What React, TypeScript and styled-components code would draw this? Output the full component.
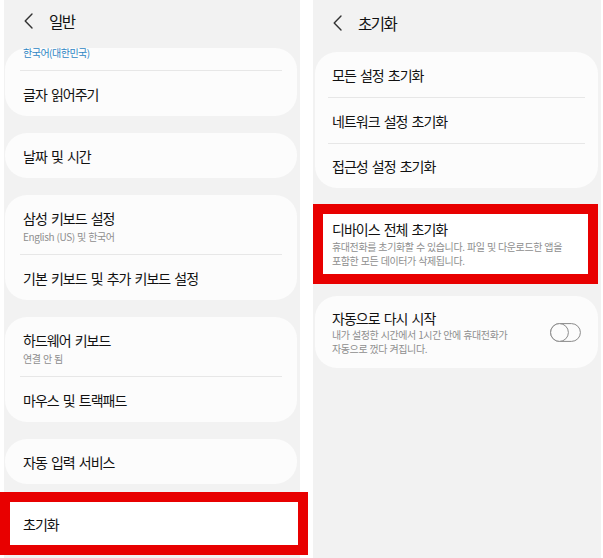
import React from "react";
import styled, { createGlobalStyle } from "styled-components";

const Global = createGlobalStyle`
  html, body { margin: 0; padding: 0; background: #ffffff; }
  body { font-family: "Noto Sans CJK KR", "Noto Sans", sans-serif; }
  #root { width: 603px; height: 558px; overflow: hidden; }
`;

const Page = styled.div`
  display: flex;
  align-items: stretch;
  width: 603px;
  height: 558px;
  padding-left: 4px;
  box-sizing: border-box;
  background: #ffffff;
`;

const Panel = styled.div<{ $width: number; $padL: number; $padR: number; $ml?: number }>`
  display: flex;
  flex-direction: column;
  width: ${(p) => p.$width}px;
  margin-left: ${(p) => p.$ml ?? 0}px;
  padding: 0 ${(p) => p.$padR}px 0 ${(p) => p.$padL}px;
  box-sizing: border-box;
  background: #f2f2f2;
  flex-shrink: 0;
`;

const Header = styled.div<{ $height: number; $padL: number }>`
  display: flex;
  align-items: center;
  gap: 16px;
  height: ${(p) => p.$height}px;
  padding-left: ${(p) => p.$padL}px;
  flex-shrink: 0;
`;

const HeaderTitle = styled.span`
  font-size: 15.5px;
  letter-spacing: -1.5px;
  color: #111111;
  line-height: 20px;
`;

const List = styled.div<{ $padTop: number }>`
  display: flex;
  flex-direction: column;
  gap: 17px;
  padding-top: ${(p) => p.$padTop}px;
  flex-shrink: 0;
`;

const Card = styled.div`
  display: flex;
  flex-direction: column;
  flex-shrink: 0;
  background: #fcfcfc;
  border-radius: 22px;
  overflow: hidden;
`;

const Frame = styled.div<{ $m: string }>`
  display: flex;
  flex-direction: column;
  flex-shrink: 0;
  border: 10px solid #e80000;
  background: #ffffff;
  margin: ${(p) => p.$m};
`;

const Row = styled.div<{ $h?: number; $pt?: number; $pb?: number; $px?: number }>`
  display: flex;
  align-items: center;
  justify-content: space-between;
  gap: 10px;
  min-height: ${(p) => p.$h ?? 45}px;
  padding: ${(p) => p.$pt ?? 0}px ${(p) => p.$px ?? 18}px ${(p) => p.$pb ?? 0}px;
  box-sizing: border-box;
`;

const TextCol = styled.div`
  display: flex;
  flex-direction: column;
`;

const Title = styled.span`
  font-size: 14px;
  line-height: 18px;
  letter-spacing: -1px;
  word-spacing: 2px;
  color: #111111;
  white-space: nowrap;
`;

const Sub = styled.span<{ $mt?: number }>`
  font-size: 10px;
  line-height: 14px;
  letter-spacing: -0.4px;
  word-spacing: 0.5px;
  color: #8e8e8e;
  margin-top: ${(p) => p.$mt ?? 0}px;
`;

const ClippedRow = styled.div`
  height: 22px;
  padding: 0 18px;
  display: flex;
  align-items: flex-start;
`;

const BlueText = styled.span`
  font-size: 10px;
  line-height: 12px;
  letter-spacing: -0.5px;
  color: #2f86c4;
  margin-top: -1px;
`;

const Divider = styled.div<{ $mx: number }>`
  height: 1px;
  flex-shrink: 0;
  background: #e7e7e7;
  margin: 0 ${(p) => p.$mx}px;
`;

const Chevron = () => (
  <svg width="9" height="16" viewBox="0 0 9 16" fill="none">
    <polyline points="8,1 1.2,8 8,15" stroke="#333" strokeWidth="1.4" strokeLinecap="round" strokeLinejoin="round" />
  </svg>
);

const Toggle = () => (
  <svg width="31" height="19" viewBox="0 0 31 19" fill="none">
    <rect x="0.6" y="0.6" width="29.8" height="17.8" rx="8.9" stroke="#8a8a8a" strokeWidth="1" />
    <circle cx="9.5" cy="9.5" r="8.9" stroke="#8a8a8a" strokeWidth="1" fill="#fcfcfc" />
  </svg>
);

export default function App() {
  return (
    <>
      <Global />
      <Page>
        <Panel $width={296} $padL={1} $padR={3}>
          <Header $height={42} $padL={19}>
            <Chevron />
            <HeaderTitle>일반</HeaderTitle>
          </Header>
          <List $padTop={6}>
            <Card>
              <ClippedRow>
                <BlueText>한국어(대한민국)</BlueText>
              </ClippedRow>
              <Divider $mx={15} />
              <Row>
                <Title>글자 읽어주기</Title>
              </Row>
            </Card>
            <Card>
              <Row>
                <Title>날짜 및 시간</Title>
              </Row>
            </Card>
            <Card>
              <Row $h={59} $pt={14} $pb={10}>
                <TextCol>
                  <Title>삼성 키보드 설정</Title>
                  <Sub $mt={3}>English (US) 및 한국어</Sub>
                </TextCol>
              </Row>
              <Divider $mx={15} />
              <Row $h={45}>
                <Title>기본 키보드 및 추가 키보드 설정</Title>
              </Row>
            </Card>
            <Card>
              <Row $h={59} $pt={14} $pb={10}>
                <TextCol>
                  <Title>하드웨어 키보드</Title>
                  <Sub $mt={3}>연결 안 됨</Sub>
                </TextCol>
              </Row>
              <Divider $mx={15} />
              <Row $h={45}>
                <Title>마우스 및 트랙패드</Title>
              </Row>
            </Card>
            <Card>
              <Row>
                <Title>자동 입력 서비스</Title>
              </Row>
            </Card>
            <Frame $m="-9px -11px 0 -5px">
              <Row $h={43} $px={13}>
                <Title>초기화</Title>
              </Row>
            </Frame>
          </List>
        </Panel>

        <Panel $width={288} $padL={2} $padR={3} $ml={13}>
          <Header $height={46} $padL={18}>
            <Chevron />
            <HeaderTitle>초기화</HeaderTitle>
          </Header>
          <List $padTop={6}>
            <Card>
              <Row $px={17}>
                <Title>모든 설정 초기화</Title>
              </Row>
              <Divider $mx={13} />
              <Row $px={17}>
                <Title>네트워크 설정 초기화</Title>
              </Row>
              <Divider $mx={13} />
              <Row $px={17} $h={44}>
                <Title>접근성 설정 초기화</Title>
              </Row>
            </Card>
            <Frame $m="-1px 0 -5px -2px">
              <Row $h={58} $pt={6} $pb={6} $px={9}>
                <TextCol>
                  <Title>디바이스 전체 초기화</Title>
                  <Sub $mt={2}>
                    휴대전화를 초기화할 수 있습니다. 파일 및 다운로드한 앱을
                    <br />
                    포함한 모든 데이터가 삭제됩니다.
                  </Sub>
                </TextCol>
              </Row>
            </Frame>
            <Card>
              <Row $h={72} $pt={12} $pb={12} $px={17}>
                <TextCol>
                  <Title>자동으로 다시 시작</Title>
                  <Sub $mt={1}>
                    내가 설정한 시간에서 1시간 안에 휴대전화가
                    <br />
                    자동으로 껐다 켜집니다.
                  </Sub>
                </TextCol>
                <Toggle />
              </Row>
            </Card>
          </List>
        </Panel>
      </Page>
    </>
  );
}
